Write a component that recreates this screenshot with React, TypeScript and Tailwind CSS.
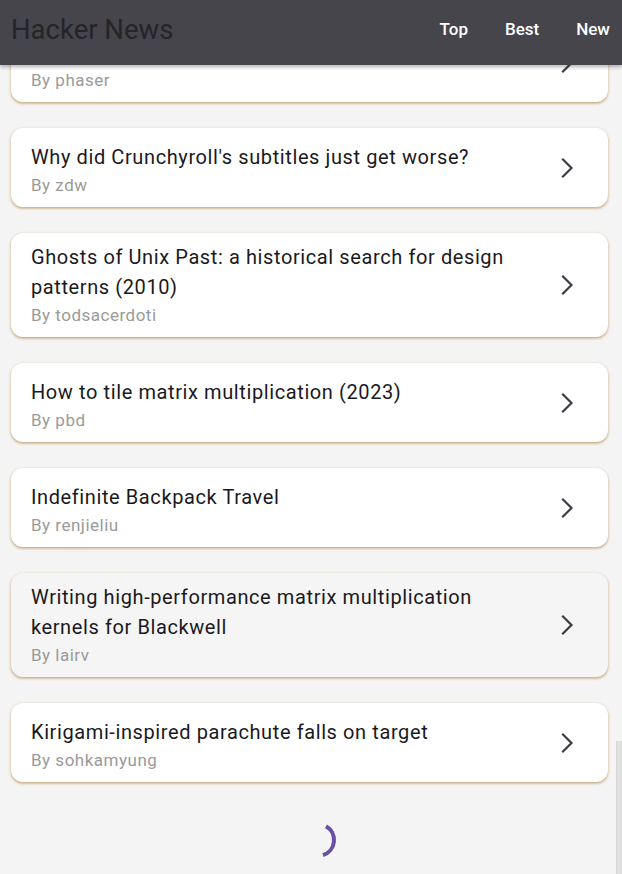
import React from "react";

type Story = { title: string; by: string };

const stories: Story[] = [
  { title: "Show HN: A tiny game engine written in C", by: "phaser" },
  { title: "Why did Crunchyroll's subtitles just get worse?", by: "zdw" },
  { title: "Ghosts of Unix Past: a historical search for design patterns (2010)", by: "todsacerdoti" },
  { title: "How to tile matrix multiplication (2023)", by: "pbd" },
  { title: "Indefinite Backpack Travel", by: "renjieliu" },
  { title: "Writing high-performance matrix multiplication kernels for Blackwell", by: "lairv" },
  { title: "Kirigami-inspired parachute falls on target", by: "sohkamyung" },
];

function Chevron() {
  return (
    <svg width="34" height="34" viewBox="0 0 34 34" className="shrink-0" fill="none">
      <path d="M13 8.5 L21.5 17 L13 25.5" stroke="#3f3d44" strokeWidth="2.2" strokeLinecap="square" strokeLinejoin="miter" />
    </svg>
  );
}

function Card({ story, hovered }: { story: Story; hovered?: boolean }) {
  return (
    <div
      className={
        "ml-[11px] mr-[14px] min-h-[79px] rounded-[12px] flex items-center pl-[20px] pr-[24px] shadow-[0_1px_3px_rgba(170,120,50,0.55),0_2px_2px_rgba(170,120,50,0.2)] " +
        (hovered ? "bg-[#f5f5f5]" : "bg-white")
      }
    >
      <div className="flex-1 self-stretch flex flex-col justify-end py-[9px] pr-[16px]">
        <div className="text-[20px] leading-[30px] tracking-[0.6px] text-[#1a191e]">{story.title}</div>
        <div className="text-[17px] leading-[26px] tracking-[0.5px] text-[#9a9a9a]">By {story.by}</div>
      </div>
      <Chevron />
    </div>
  );
}

function Spinner() {
  const cx = 20;
  const cy = 20;
  const r = 16;
  const a1 = (-60 * Math.PI) / 180;
  const a2 = (72 * Math.PI) / 180;
  const x1 = cx + r * Math.cos(a1);
  const y1 = cy + r * Math.sin(a1);
  const x2 = cx + r * Math.cos(a2);
  const y2 = cy + r * Math.sin(a2);
  return (
    <svg width="40" height="40" viewBox="0 0 40 40">
      <path
        d={`M${x1} ${y1} A${r} ${r} 0 0 1 ${x2} ${y2}`}
        fill="none"
        stroke="#6750a4"
        strokeWidth="4"
      />
    </svg>
  );
}

export default function App() {
  return (
    <div
      className="relative w-[622px] h-[874px] overflow-hidden bg-[#f4f4f4]"
      style={{ fontFamily: "Roboto, 'Noto Sans', sans-serif" }}
    >
      <div className="pt-[23px] flex flex-col gap-[26px]">
        {stories.map((s, i) => (
          <Card key={i} story={s} hovered={i === 5} />
        ))}
      </div>
      <div className="flex justify-center pl-[14px] pt-[38px]">
        <Spinner />
      </div>

      {/* scrollbar thumb */}
      <div className="absolute right-0 top-[741px] w-[6px] h-[140px] bg-[#e0e0e0] border-l border-[#d6d6d6]" />

      {/* app bar */}
      <div className="absolute top-0 left-0 right-0 h-[65px] bg-[#46454b] flex items-center justify-between pl-[11px] pr-[12px] shadow-[0_2px_4px_rgba(0,0,0,0.3)]">
        <div className="text-[27.5px] leading-none text-[#252429] -mt-[6px]">Hacker News</div>
        <div className="flex items-center gap-[37px] text-[17px] font-medium text-white -mt-[6px]">
          <span>Top</span>
          <span>Best</span>
          <span>New</span>
        </div>
      </div>
    </div>
  );
}
